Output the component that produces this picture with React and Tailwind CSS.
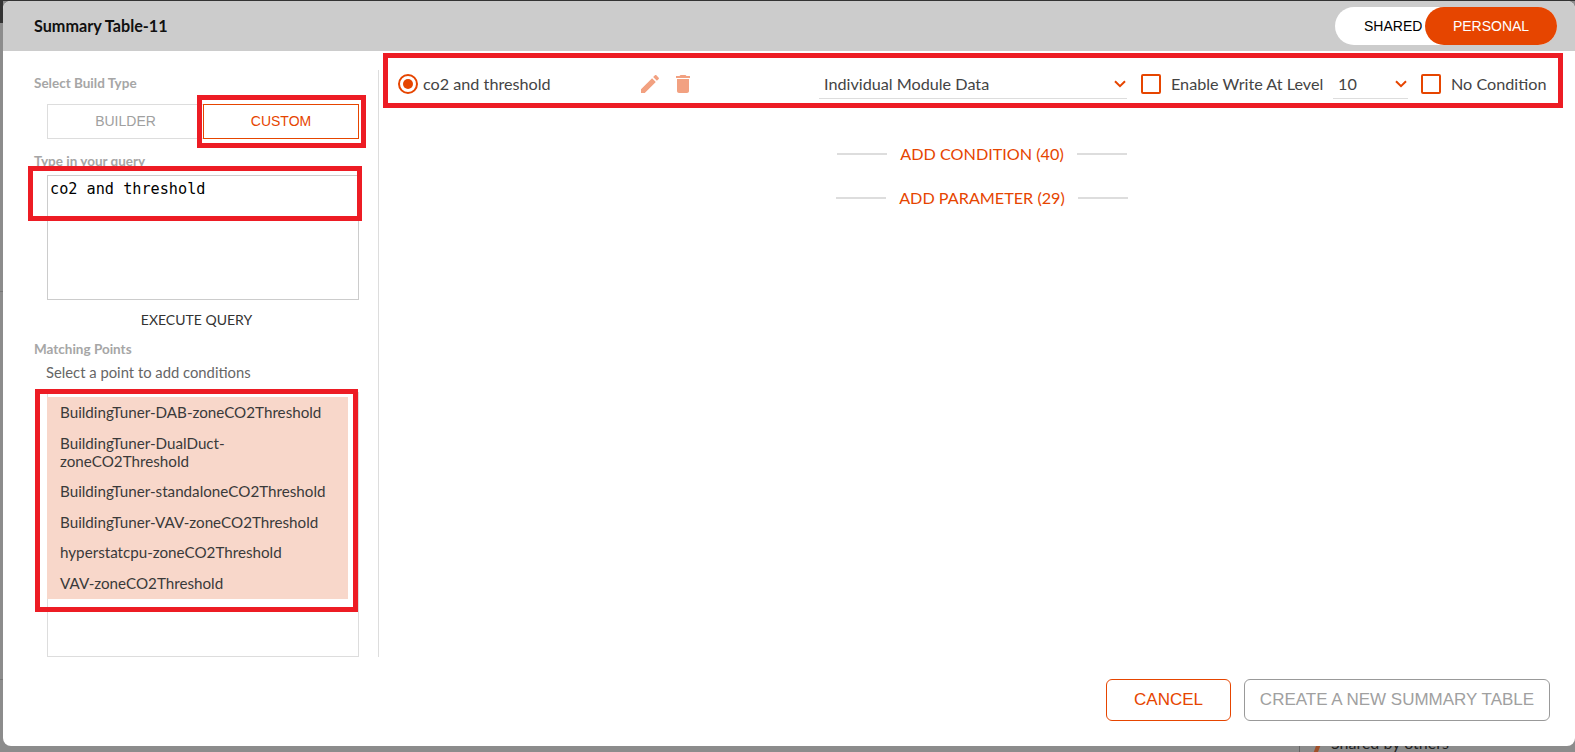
import React from "react";

const lato = "font-['Lato','Noto_Sans',sans-serif]";
const arial = "font-['Liberation_Sans',Arial,sans-serif]";

function RedBox({ className }) {
  return <div className={`absolute border-[5px] border-[#ed1c24] pointer-events-none ${className}`} />;
}

function Chevron() {
  return (
    <svg width="12" height="8" viewBox="0 0 12 8" className="shrink-0">
      <path d="M1 1.2 L6 6.2 L11 1.2" fill="none" stroke="#e64500" strokeWidth="2" />
    </svg>
  );
}

function Select({ value, className }) {
  return (
    <div className={`h-[30px] flex items-center justify-between border-b border-[#ddd] pl-[5px] pr-[1px] text-[#444] ${className}`}>
      <span className="pt-[2px]">{value}</span>
      <Chevron />
    </div>
  );
}

function Checkbox() {
  return <div className="w-[20px] h-[20px] shrink-0 rounded-[2px] border-2 border-[#e64500] bg-white" />;
}

function AddLine({ label, mt }) {
  return (
    <div className={`flex items-center justify-center pl-[10px] ${mt}`}>
      <div className="w-[50px] h-[2px] bg-[#ddd]" />
      <span className="mx-[13px] text-[16.2px] leading-[20px] text-[#e64500]">{label}</span>
      <div className="w-[50px] h-[2px] bg-[#ddd]" />
    </div>
  );
}

const points = [
  "BuildingTuner-DAB-zoneCO2Threshold",
  "BuildingTuner-DualDuct-zoneCO2Threshold",
  "BuildingTuner-standaloneCO2Threshold",
  "BuildingTuner-VAV-zoneCO2Threshold",
  "hyperstatcpu-zoneCO2Threshold",
  "VAV-zoneCO2Threshold",
];

export default function App() {
  return (
    <div className={`relative h-[752px] w-full overflow-hidden bg-[#8c8c8c] pl-[3px] pb-[6px] border-t border-[#333] ${lato}`}>
      <div className="absolute left-0 top-0 w-[3px] h-[22px] bg-[#333]" />
      <div className="absolute left-0 top-[290px] w-[3px] h-px bg-[#777]" />
      <div className="absolute left-0 top-[678px] w-[3px] h-px bg-[#777]" />
      <div className="absolute left-[1299px] top-[740px] w-px h-[12px] bg-[#666]" />
      <div className="absolute left-[1315px] top-[744px] w-[4px] h-[8px] rotate-[20deg] bg-[#a0502a]" />
      <div className="absolute left-[1331px] top-[732px] text-[16px] leading-[20px] text-[#222]">Shared by others</div>

      <div className="relative z-10 h-[745px] flex flex-col rounded-lg bg-white overflow-hidden">
        <header className="h-[50px] shrink-0 bg-[#ccc] flex items-center justify-between pl-[31px] pr-[18px]">
          <h1 className="text-[16.2px] font-bold text-[#111]">Summary Table-11</h1>
          <div className={`flex h-[38px] w-[222px] rounded-full bg-white items-center justify-between text-[14px] ${arial}`}>
            <span className="pl-[29px] text-black">SHARED</span>
            <span className="w-[132px] h-full rounded-full bg-[#e64500] text-white flex items-center justify-center">PERSONAL</span>
          </div>
        </header>

        <main className="mt-[19px] h-[587px] shrink-0 flex">
          <aside className="w-[376px] shrink-0 border-r border-[#ddd] pl-[31px] pr-[19px] pt-[3px] flex flex-col">
            <div className="text-[13.5px] leading-[20px] font-bold text-[#a6a6a6]">Select Build Type</div>
            <div className={`mt-[11px] ml-[13px] flex h-[35px] text-[14px] ${arial}`}>
              <div className="w-[156px] border border-[#ddd] border-r-0 flex items-center justify-center text-[#a0a0a0]">BUILDER</div>
              <div className="relative w-[156px] border border-[#e64500] flex items-center justify-center text-[#e64500]">
                CUSTOM
                <RedBox className="-left-[7px] -right-[8px] -top-[10px] -bottom-[10px]" />
              </div>
            </div>
            <div className="mt-[12px] text-[13.5px] leading-[20px] font-bold text-[#a6a6a6]">Type in your query</div>
            <div className="relative mt-[4px] ml-[13px] h-[125px]">
              <textarea
                readOnly
                defaultValue="co2 and threshold"
                className="block w-full h-full resize-none border border-[#ccc] px-[2px] pt-[3px] text-[15.2px] leading-[20px] text-black outline-none font-['DejaVu_Sans_Mono',monospace]"
              />
              <RedBox className="-left-[19px] -right-[3px] -top-[9px] h-[55px]" />
            </div>
            <div className="mt-[10px] text-center text-[14px] leading-[20px] text-[#333]">EXECUTE QUERY</div>
            <div className="mt-[9px] text-[13.5px] leading-[20px] font-bold text-[#a6a6a6]">Matching Points</div>
            <div className="mt-[3px] ml-[12px] text-[14.8px] leading-[20px] text-[#666]">Select a point to add conditions</div>
            <div className="relative mt-[10px] ml-[13px] h-[265px] border border-[#ddd] pt-[4px] pr-[10px]">
              <ul className="-ml-px pb-px bg-[#f8d7ca]">
                {points.map((p) => (
                  <li key={p} className="py-[6.25px] pl-[13px] pr-[10px] text-[15.2px] leading-[18px] text-[#3a3a3a]">{p}</li>
                ))}
              </ul>
              <RedBox className="-left-[13px] right-0 -top-[4px] h-[223px]" />
            </div>
          </aside>

          <section className="flex-1 min-w-0">
            <div className="relative -mt-px h-[30px] flex items-center pl-[19px] text-[16.2px] text-[#444]">
              <div className="w-[20px] h-[20px] shrink-0 rounded-full border-2 border-[#e64500] flex items-center justify-center">
                <div className="w-[10px] h-[10px] rounded-full bg-[#e64500]" />
              </div>
              <span className="ml-[5px] w-[215px] shrink-0">co2 and threshold</span>
              <svg width="24" height="24" viewBox="0 0 24 24" className="shrink-0" fill="#f2a181">
                <path d="M3 17.25V21h3.75L17.81 9.94l-3.75-3.75L3 17.25zM20.71 7.04c.39-.39.39-1.02 0-1.41l-2.34-2.34c-.39-.39-1.02-.39-1.41 0l-1.83 1.83 3.75 3.75 1.83-1.83z" />
              </svg>
              <svg width="24" height="24" viewBox="0 0 24 24" className="ml-[9px] shrink-0" fill="#f2a181">
                <path d="M6 19c0 1.1.9 2 2 2h8c1.1 0 2-.9 2-2V7H6v12zM19 4h-3.5l-1-1h-5l-1 1H5v2h14V4z" />
              </svg>
              <Select value="Individual Module Data" className="ml-[124px] w-[308px] shrink-0" />
              <div className="ml-[14px]"><Checkbox /></div>
              <span className="ml-[10px] w-[162px] shrink-0 whitespace-nowrap">Enable Write At Level</span>
              <Select value="10" className="w-[75px] shrink-0" />
              <div className="ml-[13px]"><Checkbox /></div>
              <span className="ml-[10px] whitespace-nowrap">No Condition</span>
              <RedBox className="left-[4px] right-[12px] -top-[16px] -bottom-[9px]" />
            </div>
            <AddLine label="ADD CONDITION (40)" mt="mt-[45px]" />
            <AddLine label="ADD PARAMETER (29)" mt="mt-[24px]" />
          </section>
        </main>

        <footer className={`mt-[22px] flex justify-end gap-[13px] pr-[25px] text-[17px] ${arial}`}>
          <button className="w-[125px] h-[42px] rounded-md border border-[#e64500] text-[#e64500]">CANCEL</button>
          <button className="w-[306px] h-[42px] rounded-md border border-[#999] text-[#a0a0a0]">CREATE A NEW SUMMARY TABLE</button>
        </footer>
      </div>
    </div>
  );
}
